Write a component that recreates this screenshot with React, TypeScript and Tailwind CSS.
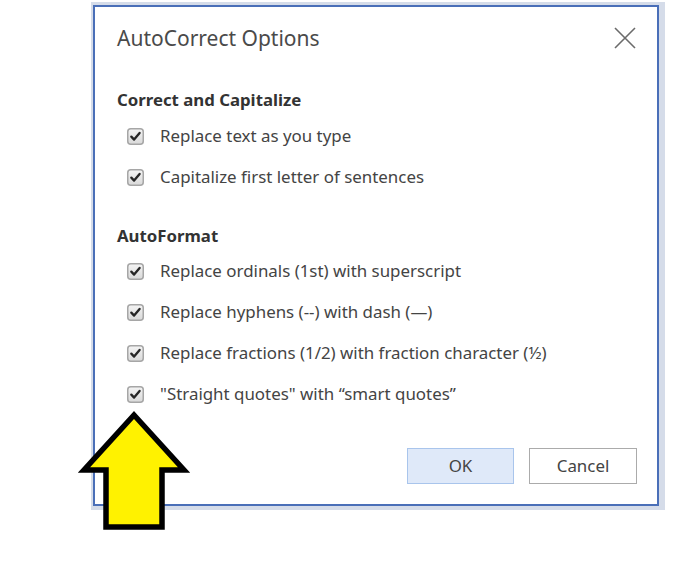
import React from "react";

const font = { fontFamily: '"Noto Sans", "Open Sans", sans-serif' };

const CheckBox = () => (
  <svg width="17" height="17" viewBox="0 0 17 17" className="shrink-0">
    <defs>
      <linearGradient id="cbg" x1="0" y1="0" x2="0" y2="1">
        <stop offset="0" stopColor="#f4f4f4" />
        <stop offset="1" stopColor="#d9d9d9" />
      </linearGradient>
    </defs>
    <rect x="0.75" y="0.75" width="15.5" height="15.5" rx="3" fill="url(#cbg)" stroke="#a6a6a6" strokeWidth="1.5" />
    <path d="M4.3 8.6 L7.1 11.6 L12.6 4.9" fill="none" stroke="#262626" strokeWidth="2.3" strokeLinecap="round" strokeLinejoin="round" />
  </svg>
);

const Option = ({ label }: { label: string }) => (
  <div className="flex h-[41px] items-center pl-[10px]">
    <CheckBox />
    <span className="ml-[16px] text-[16.9px] text-[#444]">{label}</span>
  </div>
);

const Heading = ({ children }: { children: React.ReactNode }) => (
  <div className="flex h-[24px] items-center text-[16.8px] font-bold text-[#333]">{children}</div>
);

const Arrow = () => (
  <svg
    width="120"
    height="124"
    viewBox="0 0 120 124"
    className="pointer-events-none absolute left-[74px] top-[407px]"
  >
    <polygon
      points="60,8 110,63 88,63 88,120 32,120 32,63 10,63"
      fill="#fff200"
      stroke="#000"
      strokeWidth="5.5"
      strokeLinejoin="miter"
    />
  </svg>
);

export default function App() {
  return (
    <div className="relative h-[566px] w-[676px] overflow-hidden bg-white" style={font}>
      <div className="ml-[91px] mt-[2px] w-[574px] bg-[#d5dce9] pb-[4px] pl-[2px] pr-[6px] pt-[3px]">
        <div className="relative h-[501px] border-2 border-[#4a6fb8] bg-white pl-[22px]">
          <div className="flex items-center justify-between pr-[20px] pt-[16px]">
            <span className="text-[21px] text-[#4a4a4a]">AutoCorrect Options</span>
            <svg width="24" height="24" viewBox="0 0 24 24" className="mt-[-2px]">
              <path d="M2 2 L22 22 M22 2 L2 22" stroke="#6b6b6b" strokeWidth="1.6" fill="none" />
            </svg>
          </div>

          <div className="mt-[33px]">
            <Heading>Correct and Capitalize</Heading>
            <div className="mt-[4px]">
              <Option label="Replace text as you type" />
              <Option label="Capitalize first letter of sentences" />
            </div>
          </div>

          <div className="mt-[26px]">
            <Heading>AutoFormat</Heading>
            <div className="mt-[3px]">
              <Option label="Replace ordinals (1st) with superscript" />
              <Option label="Replace hyphens (--) with dash (—)" />
              <Option label="Replace fractions (1/2) with fraction character (½)" />
              <Option label={'"Straight quotes" with \u201Csmart quotes\u201D'} />
            </div>
          </div>

          <div className="mt-[33px] flex justify-end gap-[15px] pr-[20px]">
            <button className="h-[36px] w-[107px] border border-[#a9c5ec] bg-[#dfe9f9] text-[16.9px] text-[#444]">
              OK
            </button>
            <button className="h-[36px] w-[108px] border border-[#ababab] bg-white text-[16.9px] text-[#444]">
              Cancel
            </button>
          </div>
        </div>
      </div>
      <Arrow />
    </div>
  );
}
